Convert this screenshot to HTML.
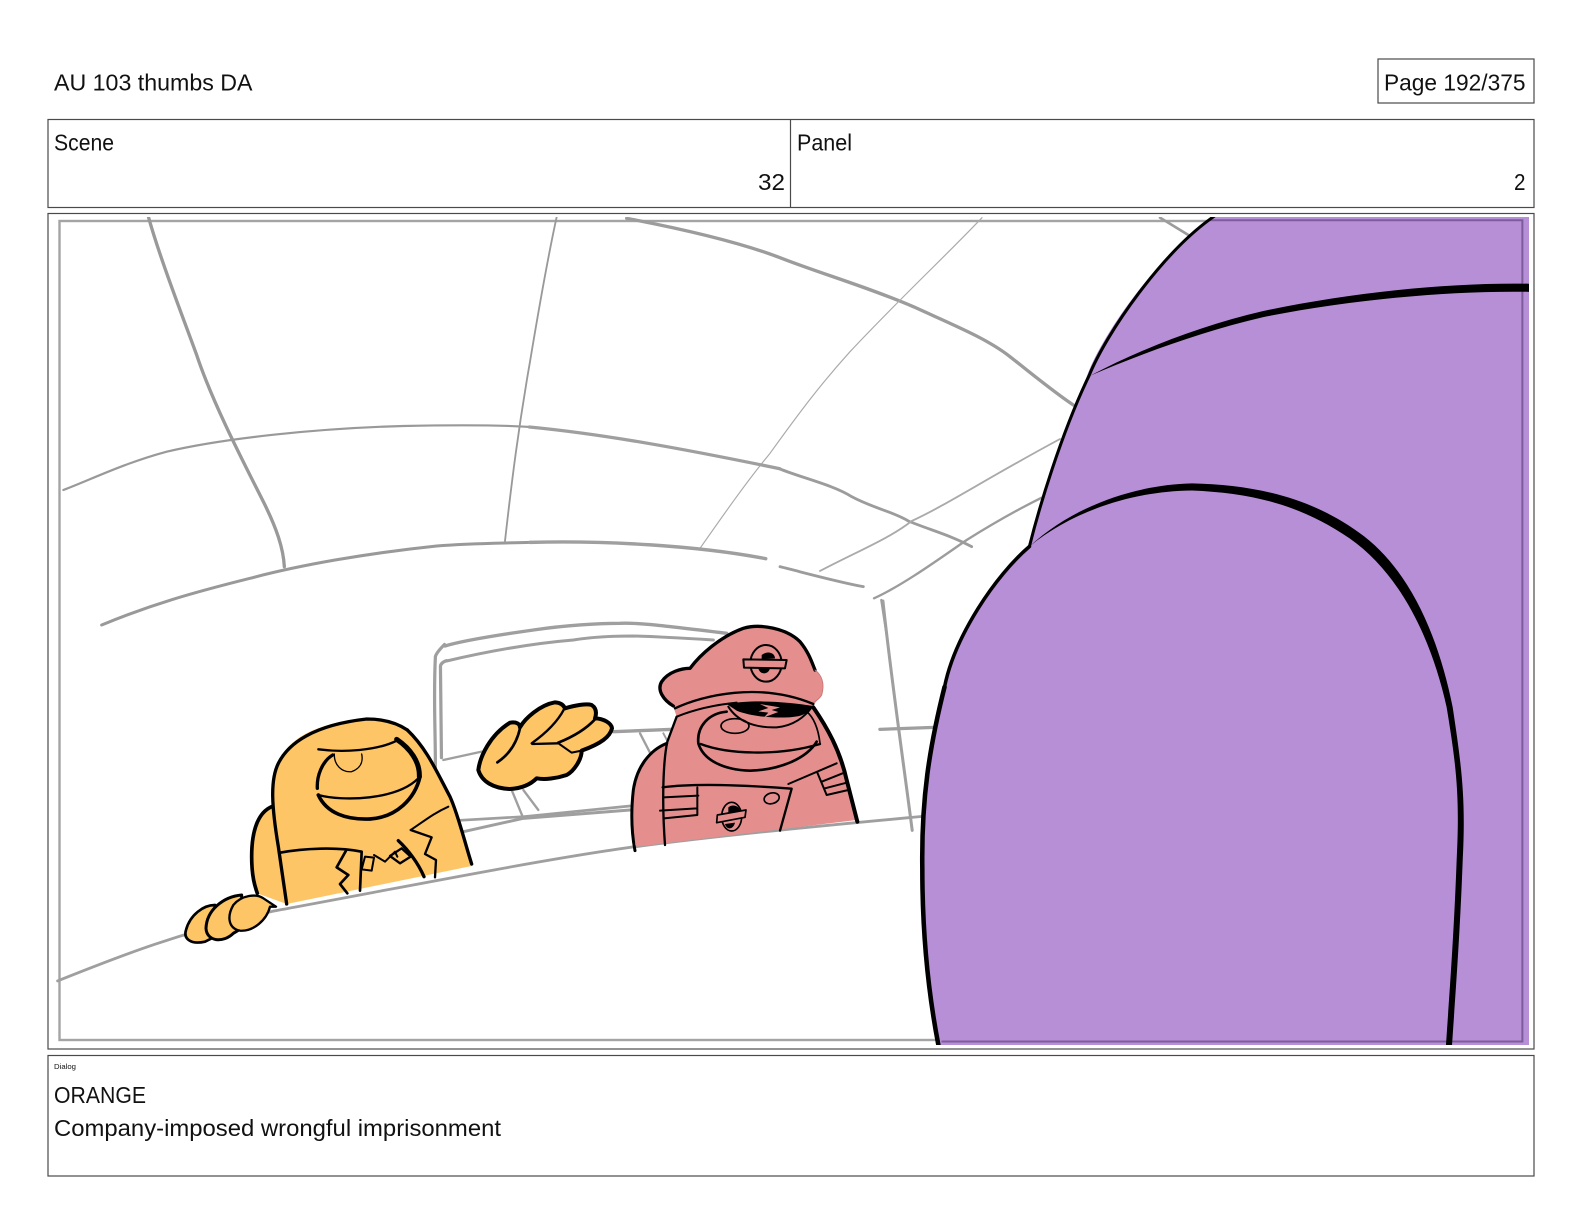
<!DOCTYPE html>
<html><head><meta charset="utf-8"><title>AU 103 thumbs DA</title>
<style>html,body{margin:0;padding:0;background:#fff;width:1584px;height:1224px;overflow:hidden}svg{display:block}text{font-family:"Liberation Sans",sans-serif;fill:#111}</style></head>
<body>
<svg width="1584" height="1224" viewBox="0 0 1584 1224" xmlns="http://www.w3.org/2000/svg">
<rect width="1584" height="1224" fill="#fff"/>
<defs><clipPath id="c"><rect x="49" y="217" width="1480" height="828"/></clipPath></defs>
<g fill="none" stroke="#4a4a4a" stroke-width="1.2">
<rect x="1378" y="59" width="156" height="44"/>
<rect x="48" y="119.500" width="1486" height="88"/>
<line x1="790.500" y1="119.500" x2="790.500" y2="207.500"/>
<rect x="48" y="213.500" width="1486" height="835.500"/>
<rect x="48" y="1055.500" width="1486" height="120.500"/>
</g>
<text x="54" y="90.500" font-size="23" textLength="198.500" lengthAdjust="spacingAndGlyphs">AU 103 thumbs DA</text>
<text x="1384" y="90.500" font-size="23" textLength="141.500" lengthAdjust="spacingAndGlyphs">Page 192/375</text>
<text x="54" y="150.500" font-size="23" textLength="60" lengthAdjust="spacingAndGlyphs">Scene</text>
<text x="797" y="150.500" font-size="23" textLength="55" lengthAdjust="spacingAndGlyphs">Panel</text>
<text x="758" y="190" font-size="23" textLength="27" lengthAdjust="spacingAndGlyphs">32</text>
<text x="1514" y="190" font-size="23" textLength="11.500" lengthAdjust="spacingAndGlyphs">2</text>
<text x="54" y="1069" font-size="7.500" textLength="22" lengthAdjust="spacingAndGlyphs">Dialog</text>
<text x="54" y="1103" font-size="23" textLength="92" lengthAdjust="spacingAndGlyphs">ORANGE</text>
<text x="54" y="1136" font-size="23" textLength="447" lengthAdjust="spacingAndGlyphs">Company-imposed wrongful imprisonment</text>

<g clip-path="url(#c)">
<rect x="59.500" y="221" width="1463" height="819" fill="none" stroke="#a4a4a4" stroke-width="2.400"/>
<!-- upper-left lines, zoom coords -->
<g transform="translate(50,215) scale(.33333)" fill="none" stroke="#999" stroke-linecap="round">
<path d="M296,8 C330,130 400,310 440,420 C490,570 590,760 640,860 C680,940 700,1000 703,1055" stroke-width="10"/>
<path d="M40,825 C120,795 220,745 350,710 C520,670 800,640 1060,633 C1200,630 1350,630 1440,636" stroke-width="6.500"/>
<path d="M155,1230 C300,1170 420,1135 600,1090 C750,1050 950,1015 1160,993 C1260,985 1350,985 1440,982" stroke-width="9"/>
<path d="M1365,978 C1385,800 1405,640 1440,440 C1470,260 1495,120 1520,6" stroke-width="5.500"/>
</g>
<!-- upper-right lines, zoom coords -->
<g transform="translate(780,215) scale(.33333)" fill="none" stroke="#9c9c9c" stroke-linecap="round">
<path d="M-460,10 C-250,50 -100,90 0,128 C120,175 260,215 400,275 C520,330 620,370 690,425 C760,480 820,530 880,570" stroke-width="10"/>
<path d="M606,8 C500,120 360,250 210,410 C120,510 60,590 -30,715 C-100,800 -170,900 -240,1000" stroke-width="3.500" stroke="#aaa"/>
<path d="M1140,8 L1225,60" stroke-width="8"/>
<path d="M0,762 C70,790 160,810 215,845 C280,880 340,890 385,918 C450,945 510,960 575,995" stroke-width="8.500"/>
<path d="M120,1068 C230,1010 330,970 395,918 C500,870 620,790 840,672" stroke-width="5.500" stroke="#aaa"/>
<path d="M282,1150 C370,1110 480,1030 560,975 C640,925 710,885 785,848" stroke-width="7"/>
<path d="M0,1055 C80,1075 170,1100 250,1115" stroke-width="8.500"/>
<path d="M304,1155 L320,1260" stroke-width="7"/>
</g>
<!-- middle / lower lines -->
<g transform="scale(1.0102)" fill="none" stroke="#9f9f9f" stroke-linecap="round">
<path d="M524,422.700 C600,430 680,445 772,464" stroke-width="3.200"/>
<path d="M524.700,536.900 C600,535 690,540 758,553" stroke-width="3.400"/>
<path d="M874,595 C882,670 895,760 903,822" stroke-width="3"/>
<path d="M871,722 L925,720" stroke-width="3.200"/>
<path d="M57,971 C110,950 170,925 270,902 C390,880 540,850 630,838 C730,825 840,815 915,808" stroke-width="2.800"/>
<path d="M431,760 C431,720 429,690 431,650 Q432,646 440,638" stroke-width="3.200"/>
<path d="M437,750 L436,660 Q436,656 442,654" stroke-width="3.200"/>
</g>
<!-- window lines, zoom-2 coords -->
<g transform="translate(460,600) scale(.33333)" fill="none" stroke="#9f9f9f" stroke-linecap="round">
<path d="M-45,138 C20,118 150,100 220,90 C320,75 420,70 480,70 C530,68 570,72 800,100" stroke-width="10"/>
<path d="M-40,183 C100,150 220,130 340,120 C400,110 470,108 520,108 C600,110 680,115 760,120" stroke-width="9"/>
<path d="M460,395 L640,388" stroke-width="10"/>
<path d="M-50,480 L65,455" stroke-width="7"/>
<path d="M-20,662 L190,650 L510,618" stroke-width="8"/>
<path d="M10,695 L190,655 L510,630" stroke-width="9"/>
<path d="M155,570 L190,655" stroke-width="7"/>
<path d="M190,570 L235,630" stroke-width="7"/>
<path d="M540,400 L570,458" stroke-width="7"/>
<path d="M610,400 L625,428" stroke-width="6"/>
</g>

<!-- orange character: zoom coords -->
<g transform="translate(170,680) scale(.33333)" stroke-linecap="round" stroke-linejoin="round" fill="none" stroke="#000">
<path fill="#FDC566" stroke="none" d="M350,672 L262,640 C250,610 243,570 245,520 C248,450 270,400 308,378 C300,320 310,270 330,235 C365,175 430,130 590,115 C650,115 690,130 720,155 C775,210 800,270 840,350 C860,400 885,490 905,558 Z"/>
<path stroke-width="10" d="M350,672 L325,500 C305,380 300,300 325,250 C355,190 430,135 590,117 C640,117 680,128 712,150"/>
<path stroke-width="10" d="M712,150 C770,205 800,275 840,350 C865,405 885,490 905,552"/>
<path stroke-width="11" d="M305,380 C270,395 245,440 245,530 C245,590 255,620 262,640"/>
<path fill="#FDC566" stroke-width="8" d="M105,785 C60,795 40,775 48,750 C60,705 100,675 135,675 L125,775 Z"/>
<path fill="#FDC566" stroke-width="9" d="M190,760 C160,790 110,785 108,745 C110,690 160,650 215,645 L215,745 Z"/>
<path fill="#FDC566" stroke-width="7" d="M300,680 C290,720 250,755 210,752 C175,745 170,710 190,675 C215,645 260,640 280,655 L318,680 Z"/>
<path stroke-width="7" d="M445,208 C520,218 620,212 680,182"/>
<path stroke-width="15" d="M680,178 C720,205 750,245 748,290"/>
<path stroke-width="10" d="M488,225 C455,245 440,290 442,325"/>
<path stroke-width="11" d="M445,345 C470,400 530,420 600,417 C680,412 735,355 750,290"/>
<path stroke-width="7" d="M445,345 C520,365 680,360 745,295"/>
<path stroke-width="4" d="M493,222 C492,255 515,278 545,275 C572,265 580,245 575,222"/>
<path stroke-width="8" d="M330,518 C400,505 500,500 575,515 L570,632"/>
<path stroke-width="6" d="M835,380 C790,400 760,425 725,448"/>
<path stroke-width="8" d="M528,512 L500,562 L535,585 L510,612 L532,640"/>
<path stroke-width="6" d="M575,568 L585,530 L612,533 L605,572 Z"/>
<path stroke-width="6" d="M612,525 L645,545 L675,515 L682,530"/>
<path stroke-width="7" d="M660,528 L695,505 L722,530 L690,550 Z"/>
<path stroke-width="10" d="M685,482 C715,510 745,550 762,590"/>
<path stroke-width="7" d="M722,450 L785,472 L765,522 L798,540 L795,592"/>
</g>

<!-- hand + pink character: zoom coords -->
<g transform="translate(460,600) scale(.33333)" stroke-linecap="round" stroke-linejoin="round" fill="none" stroke="#000">
<path fill="#FDC566" stroke-width="12" d="M55,510 C60,470 90,405 150,368 C170,365 180,372 180,382 C195,355 240,315 285,307 C305,308 312,318 315,325 C345,316 380,310 395,315 C410,325 410,340 405,355 C430,355 455,370 456,385 C450,410 425,430 365,452 C365,480 340,515 320,525 C290,535 255,540 230,535 C215,550 190,565 150,567 C100,565 65,545 55,510 Z"/>
<path stroke-width="8" d="M112,487 C145,465 170,430 180,385"/>
<path stroke-width="7" d="M215,430 C250,405 290,370 312,328"/>
<path stroke-width="7" d="M217,432 L295,430"/>
<path stroke-width="8" d="M295,428 C340,410 380,385 405,358"/>
<path stroke-width="6" d="M298,432 L335,458 L365,452"/>

<path fill="#E58E8E" stroke="none" d="M530,740 C515,700 512,640 520,570 C530,500 570,450 620,430 L650,350 L640,320 C610,300 590,270 605,245 C625,215 665,205 690,205 C720,165 780,110 850,85 C900,70 980,85 1020,125 C1045,155 1055,185 1065,210 C1085,225 1095,250 1085,285 C1075,300 1065,305 1060,320 C1100,380 1140,450 1160,540 L1190,660 Z"/>
<path stroke-width="9" d="M525,752 C515,700 512,640 520,570 C530,500 570,450 620,430"/>
<path stroke-width="7" d="M650,350 L622,425 C610,480 605,600 615,735"/>
<path stroke-width="10" d="M640,318 C610,300 590,270 605,245 C625,215 665,205 690,205 C720,165 780,110 850,85 C900,70 980,85 1020,125 C1045,155 1055,185 1065,210"/>
<path stroke-width="3" stroke="#c77" d="M1065,210 C1085,225 1095,250 1085,285 C1078,298 1065,305 1055,310"/>
<path stroke-width="7" d="M645,325 C730,285 900,245 1060,312"/>
<path stroke-width="6" d="M650,350 C700,330 760,315 830,308"/>
<path fill="#000" stroke="none" d="M800,312 C880,298 980,305 1060,318 C1040,345 1020,350 985,352 C920,355 860,345 830,332 Z"/>
<path fill="#E58E8E" stroke="none" d="M900,312 L960,322 L935,330 L955,336 L912,352 L925,338 L895,334 L925,324 Z"/>
<path stroke-width="6" d="M805,320 C830,360 880,385 950,382 C1000,378 1035,350 1055,322"/>
<path stroke-width="12" d="M1060,322 C1100,380 1140,450 1160,540 L1192,665"/>
<path stroke-width="8" d="M800,335 C745,340 710,380 715,430 C730,480 790,510 870,512 C960,510 1040,475 1070,425"/>
<path stroke-width="5" d="M1040,335 C1060,350 1075,385 1080,430"/>
<path stroke-width="7" d="M722,432 C800,462 950,470 1080,432"/>
<ellipse cx="825" cy="378" rx="42" ry="22" stroke-width="5"/>
<ellipse cx="918" cy="190" rx="47" ry="55" stroke-width="6"/>
<path fill="#000" stroke="none" d="M905,165 C925,150 945,160 945,175 L905,178 Z M895,205 L930,205 C925,225 900,225 895,205 Z"/>
<path fill="#E58E8E" stroke-width="6" d="M850,178 L980,180 L975,205 L852,203 Z"/>
<path stroke-width="7" d="M608,562 C700,550 850,555 995,566 L960,692"/>
<path stroke-width="6" d="M985,552 L1130,490"/>
<path stroke-width="6" d="M610,592 L715,587 M600,632 L710,625 M612,655 L712,645 M712,562 L712,645"/>
<path stroke-width="6" d="M1072,518 L1100,585 L1165,570 M1085,545 L1148,520 M1095,565 L1160,548"/>
<ellipse cx="935" cy="595" rx="23" ry="16" stroke-width="5" transform="rotate(-15 935 595)"/>
<ellipse cx="815" cy="650" rx="30" ry="43" stroke-width="5"/>
<path fill="#000" stroke="none" d="M805,622 C820,610 840,620 840,635 L805,640 Z M795,672 L825,668 C820,690 800,690 795,672 Z"/>
<path fill="#E58E8E" stroke-width="5" d="M772,645 L858,630 L855,652 L770,668 Z"/>
</g>

<!-- purple figure -->
<g transform="scale(1.0102)">
<path fill="#B78FD6" stroke="none" d="M1200,214 L1520,214 L1520,1036 L930,1036 C920,990 913,930 913,860 C912,790 920,740 935,680 C945,630 985,570 1018,543 C1025,510 1050,430 1075,375 C1090,330 1150,250 1200,214 Z"/>
<path d="M1197,218 H1507 V1031 H932" fill="none" stroke="#6f4f8d" stroke-width="2" opacity=".8"/>
<g fill="none" stroke="#000" stroke-linecap="round" stroke-linejoin="round">
<path stroke-width="3" d="M1202,214 C1150,250 1095,330 1078,372 C1050,430 1028,505 1019,541"/>
<path stroke-width="3.500" d="M1019,541 C985,570 945,630 935,680"/>
<path stroke-width="4.500" d="M935,680 C920,740 912,790 913,860 C913,930 920,990 930,1040"/>
</g>
<path fill="#000" d="M1079,372 C1130,345 1190,322 1250,308 C1330,291 1430,279 1520,281 L1520,289 C1430,287 1330,298 1250,314 C1190,328 1130,350 1079,372 Z"/>
<path fill="#000" d="M1019,541 C1060,503 1120,480 1180,478.500 C1240,480 1295,491 1345,527 C1395,562 1424,630 1438,700 C1447,760 1451,790 1448,850 C1445,930 1441,980 1437,1040 L1431,1040 C1435,980 1439,930 1442,850 C1445,790 1442,760 1432,700 C1417,632 1386,568 1336,533 C1288,500 1240,488 1180,485.500 C1120,486 1060,507 1019,541 Z"/>
</g>
</g>
</svg>
</body></html>
